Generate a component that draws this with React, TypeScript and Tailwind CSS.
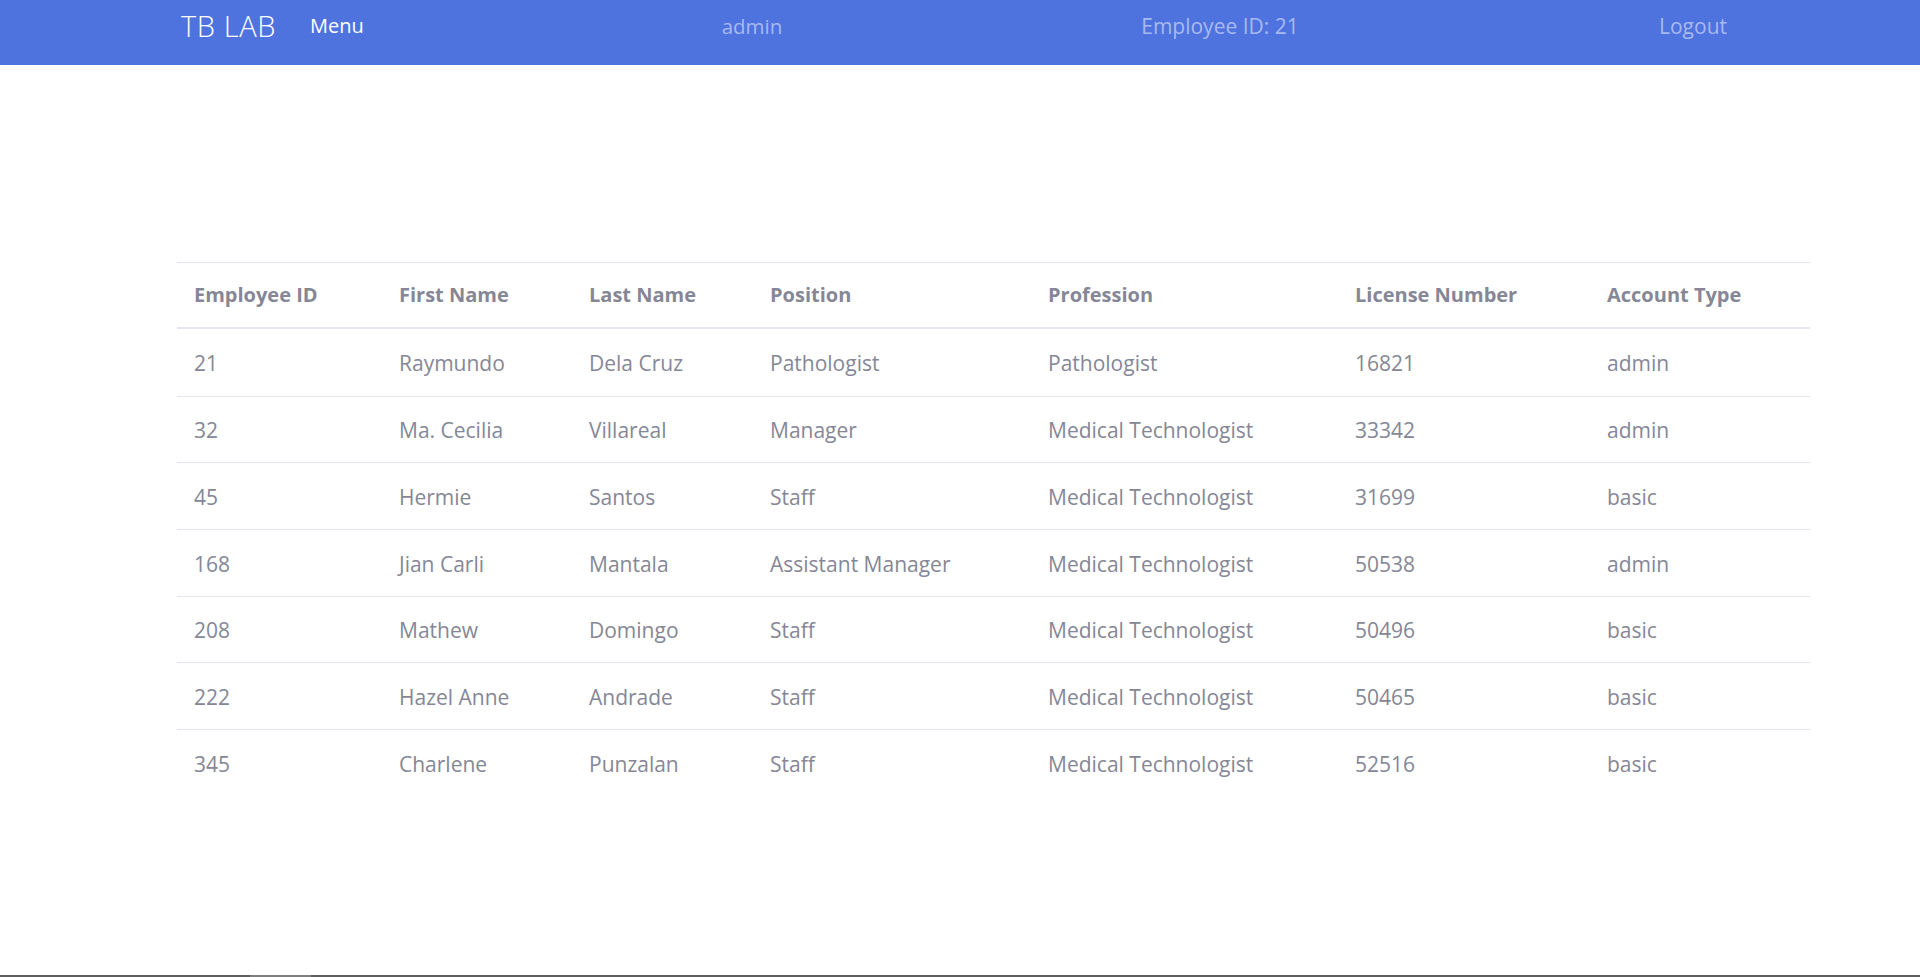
import React from "react";

const rows = [
  ["21", "Raymundo", "Dela Cruz", "Pathologist", "Pathologist", "16821", "admin"],
  ["32", "Ma. Cecilia", "Villareal", "Manager", "Medical Technologist", "33342", "admin"],
  ["45", "Hermie", "Santos", "Staff", "Medical Technologist", "31699", "basic"],
  ["168", "Jian Carli", "Mantala", "Assistant Manager", "Medical Technologist", "50538", "admin"],
  ["208", "Mathew", "Domingo", "Staff", "Medical Technologist", "50496", "basic"],
  ["222", "Hazel Anne", "Andrade", "Staff", "Medical Technologist", "50465", "basic"],
  ["345", "Charlene", "Punzalan", "Staff", "Medical Technologist", "52516", "basic"],
];

const headers = ["Employee ID", "First Name", "Last Name", "Position", "Profession", "License Number", "Account Type"];

const cols = "grid grid-cols-[205px_190px_181px_278px_307px_252px_220px]";

export default function App() {
  return (
    <div className="min-h-[977px] flex flex-col bg-white text-[#858796] font-['Open_Sans',_'Liberation_Sans',_sans-serif]">
      <nav className="h-[65px] bg-[#4e73df] flex flex-col">
        <div className="h-[52px] flex items-center">
          <div className="ml-[181px] w-[129px] text-[29px] leading-[40px] font-light tracking-[0.6px] text-white whitespace-nowrap">TB LAB</div>
          <div className="w-[342px] text-[20px] leading-[30px] text-white">Menu</div>
          <div className="w-[200px] text-center text-[20.5px] leading-[30px] text-[#a7b9ef]">admin</div>
          <div className="ml-[268px] w-[200px] text-center text-[21px] leading-[30px] text-[#a7b9ef]">Employee ID: 21</div>
          <div className="ml-[273px] w-[200px] text-center text-[21px] leading-[30px] text-[#a7b9ef]">Logout</div>
        </div>
      </nav>

      <div className="mt-[197px] ml-[177px] w-[1633px]">
        <div className={`${cols} h-[67px] items-center border-t border-b-2 border-[#e3e6f0] font-bold text-[20px]`}>
          {headers.map((h) => (
            <div key={h} className="pl-[17px] leading-[30px]">{h}</div>
          ))}
        </div>
        {rows.map((r, i) => (
          <div
            key={r[0]}
            className={`${cols} items-center text-[21px] pt-[2px] ${i === 0 ? "h-[66.5px]" : "h-[66.7px] border-t border-[#e3e6f0]"}`}
          >
            {r.map((c, j) => (
              <div key={j} className="pl-[17px] leading-[30px]">{c}</div>
            ))}
          </div>
        ))}
      </div>

      <div className="mt-auto h-[2px] bg-[#5e5e5e] flex">
        <div className="ml-[250px] w-[61px] bg-[#7e7e7e]" />
      </div>
    </div>
  );
}
